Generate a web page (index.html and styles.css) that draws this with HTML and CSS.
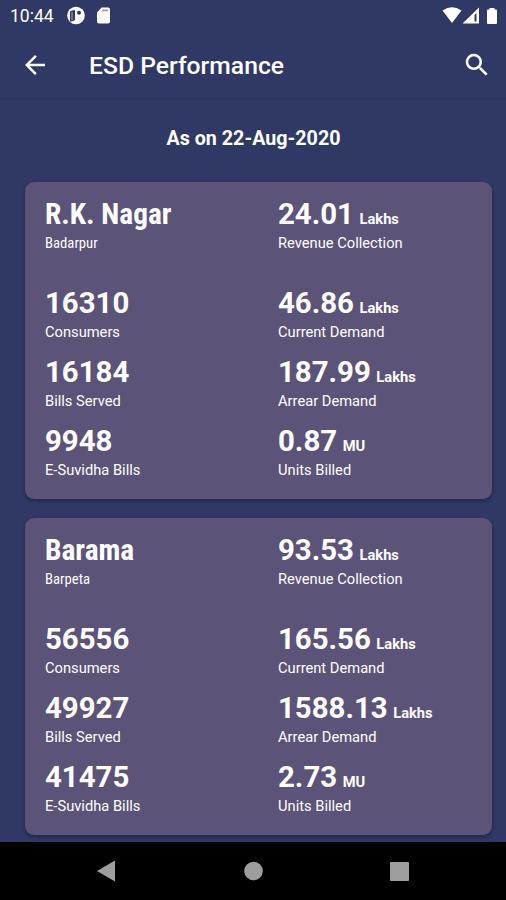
FILE: index.html
```html
<!DOCTYPE html>
<html lang="en">
<head>
<meta charset="utf-8">
<title>ESD Performance</title>
<link rel="stylesheet" href="styles.css">
</head>
<body>
<header class="status">
  <span class="clock">10:44</span>
  <svg class="status-left" width="48" height="20" viewBox="0 0 48 20"><circle cx="12" cy="9.500" r="8.800" fill="#fff"/><path d="M6 5.500q1.500-1.500 5-1.500v10l-3 1.500H6z" fill="#303965"/><path d="M7.500 6h1v8h-1z" fill="#aab0cb"/><circle cx="15" cy="6.800" r="2" fill="#303965"/><path d="M37.500 1.500h6.500q2 0 2 2v12q0 2-2 2h-9q-2 0-2-2V6.500z" fill="#fff"/><path d="M38 3.500h6v1.800h-6z" fill="#9a9fbd"/></svg>
  <svg class="status-right" width="62" height="20" viewBox="0 0 62 20"><path d="M6.500 4.500q9.500-6.500 19 0l-9.500 12.500z" fill="#fff"/><path fill-rule="evenodd" d="M43 1.500v16H26.500zM38.500 9v6.500h2V7z" fill="#fff"/><path d="M51 4.500q0-1 1-1h1.500V2h5v1.500h1.500q1 0 1 1V17q0 1-1 1h-8q-1 0-1-1z" fill="#fff"/></svg>
</header>
<nav class="appbar">
  <svg class="back" width="30" height="30" viewBox="0 0 24 24"><path d="M20 11H7.8l5.6-5.6L12 4l-8 8 8 8 1.4-1.4L7.8 13H20z" fill="#fff"/></svg>
  <h1>ESD Performance</h1>
  <svg class="search" width="30" height="30" viewBox="0 0 24 24"><path d="M15.5 14h-.79l-.28-.27A6.5 6.5 0 1 0 13.73 14.43l.27.28v.79l5 4.99L20.49 19zm-6 0a4.5 4.5 0 1 1 0-9 4.5 4.5 0 0 1 0 9z" fill="#fff"/></svg>
</nav>
<main>
  <p class="date">As on 22-Aug-2020</p>
  <section class="card">
    <div class="item"><h2>R.K. Nagar</h2><p class="place">Badarpur</p></div>
    <div class="item"><b>24.01 <small>Lakhs</small></b><p>Revenue Collection</p></div>
    <div class="item"><b>16310</b><p>Consumers</p></div>
    <div class="item"><b>46.86 <small>Lakhs</small></b><p>Current Demand</p></div>
    <div class="item"><b>16184</b><p>Bills Served</p></div>
    <div class="item"><b>187.99 <small>Lakhs</small></b><p>Arrear Demand</p></div>
    <div class="item"><b>9948</b><p>E-Suvidha Bills</p></div>
    <div class="item"><b>0.87 <small>MU</small></b><p>Units Billed</p></div>
  </section>
  <section class="card">
    <div class="item"><h2>Barama</h2><p class="place">Barpeta</p></div>
    <div class="item"><b>93.53 <small>Lakhs</small></b><p>Revenue Collection</p></div>
    <div class="item"><b>56556</b><p>Consumers</p></div>
    <div class="item"><b>165.56 <small>Lakhs</small></b><p>Current Demand</p></div>
    <div class="item"><b>49927</b><p>Bills Served</p></div>
    <div class="item"><b>1588.13 <small>Lakhs</small></b><p>Arrear Demand</p></div>
    <div class="item"><b>41475</b><p>E-Suvidha Bills</p></div>
    <div class="item"><b>2.73 <small>MU</small></b><p>Units Billed</p></div>
  </section>
</main>
<footer class="nav">
  <svg width="506" height="58" viewBox="0 0 506 58"><path d="M97 29l18-10.500v21z" fill="#9e9e9e"/><rect x="390" y="20" width="19" height="19" rx="1" fill="#9e9e9e"/><circle cx="253.500" cy="29" r="9.300" fill="#9e9e9e"/></svg>
</footer>
</body>
</html>
```

FILE: styles.css
```css
* { box-sizing: border-box; margin: 0; padding: 0; }
body { width: 506px; height: 900px; display: flex; flex-direction: column; overflow: hidden; background: #303965; color: #fff; font-family: Roboto, sans-serif; }
svg { display: block; flex: none; }
.status { height: 32px; display: flex; align-items: center; padding: 0 8px 0 10px; }
.clock { font-size: 17.5px; width: 54px; }
.status-right { margin-left: auto; }
.appbar { height: 66px; display: flex; align-items: center; padding: 0 14px 0 20px; box-shadow: 0 1px 2px #0002; }
.appbar h1 { font-size: 24.7px; font-weight: 500; margin-left: 39px; }
.search { margin-left: auto; }
main { flex: 1; min-height: 0; padding: 0 14px 0 25px; }
.date { height: 84px; line-height: 81px; font-size: 19.7px; font-weight: 700; text-align: center; padding-right: 10px; }
.card { height: 317px; margin-bottom: 19px; padding: 14px 0 0 20px; border-radius: 9px; background: #5c5378; box-shadow: 0 2px 4px #0005; display: grid; grid-template-columns: 233px 1fr; grid-template-rows: 89px 69px 69px 69px; }
.item b, .item h2 { height: 36px; font-size: 29.4px; line-height: 36px; font-weight: 700; white-space: nowrap; }
.item b { display: flex; align-items: baseline; gap: 5.5px; }
.item h2 { font-family: "Roboto Condensed", Roboto, sans-serif; }
.item small { font-size: 14.7px; line-height: 1; }
.item p { font-size: 14.7px; line-height: 22px; }
.item .place { font-family: "Roboto Condensed", Roboto, sans-serif; }
.nav { height: 58px; background: #000; }
```
